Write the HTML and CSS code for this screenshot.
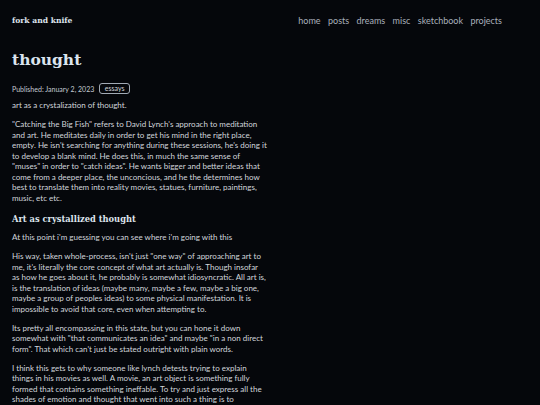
FILE: index.html
```html
<!DOCTYPE html>
<html>
<head>
<meta charset="utf-8">
<link rel="stylesheet" href="styles.css">
</head>
<body>
<header class="site-header">
  <a class="brand" href="#">fork and knife</a>
  <nav class="nav">
    <a href="#">home</a>
    <a href="#">posts</a>
    <a href="#">dreams</a>
    <a href="#">misc</a>
    <a href="#">sketchbook</a>
    <a href="#">projects</a>
  </nav>
</header>
<main class="post">
  <h1 class="title">thought</h1>
  <div class="meta">
    <span class="date">Published: January 2, 2023</span>
    <span class="tag">essays</span>
  </div>
  <p>art as a crystalization of thought.</p>
  <p>"Catching the Big Fish" refers to David Lynch's approach to meditation and art. He meditates daily in order to get his mind in the right place, empty. He isn't searching for anything during these sessions, he's doing it to develop a blank mind. He does this, in much the same sense of "muses" in order to "catch ideas". He wants bigger and better ideas that come from a deeper place, the unconcious, and he the determines how best to translate them into reality movies, statues, furniture, paintings, music, etc etc.</p>
  <h2 class="section">Art as crystallized thought</h2>
  <p>At this point i'm guessing you can see where i'm going with this</p>
  <p>His way, taken whole-process, isn't just "one way" of approaching art to me, it's literally the core concept of what art actually is. Though insofar as how he goes about it, he probably is somewhat idiosyncratic. All art is, is the translation of ideas (maybe many, maybe a few, maybe a big one, maybe a group of peoples ideas) to some physical manifestation. It is impossible to avoid that core, even when attempting to.</p>
  <p>Its pretty all encompassing in this state, but you can hone it down somewhat with "that communicates an idea" and maybe "in a non direct form". That which can't just be stated outright with plain words.</p>
  <p>I think this gets to why someone like lynch detests trying to explain things in his movies as well. A movie, an art object is something fully formed that contains something ineffable. To try and just express all the shades of emotion and thought that went into such a thing is to</p>
</main>
</body>
</html>
```
FILE: styles.css
```css
html, body {
  margin: 0;
  padding: 0;
  background: #05070b;
}
body {
  font-family: "Lato", "Noto Sans", sans-serif;
  color: #d2d6dc;
  font-size: 8px;
  line-height: 10.5px;
  overflow: hidden;
  height: 405px;
}
a { text-decoration: none; color: inherit; }
.site-header {
  display: flex;
  justify-content: space-between;
  align-items: center;
  padding: 15px 38px 0 12px;
  height: 12px;
}
.brand {
  font-family: "DejaVu Serif", serif;
  font-weight: bold;
  font-size: 7.6px;
  color: #dfe5ee;
}
.nav {
  display: flex;
  gap: 7.4px;
  font-size: 9px;
  color: #a9b0bb;
}
.post {
  width: 255px;
  padding: 0 12px;
}
.title {
  font-family: "DejaVu Serif", serif;
  font-weight: bold;
  font-size: 15.5px;
  line-height: 20px;
  color: #dbe4ee;
  margin: 23px 0 0;
}
.meta {
  display: flex;
  align-items: center;
  gap: 5px;
  margin-top: 13px;
  font-size: 7px;
  line-height: 10px;
  color: #c4c9d1;
}
.tag {
  border: 1px solid #a2aab5;
  border-radius: 3px;
  padding: 0 4.5px;
  font-size: 7px;
  line-height: 9px;
  color: #d2d6dc;
}
p {
  margin: 8.5px 0 0;
}
.meta + p { margin-top: 6px; }
.section {
  font-family: "DejaVu Serif", serif;
  font-weight: bold;
  font-size: 8.3px;
  line-height: 11px;
  color: #dfe5ee;
  margin: 10.5px 0 0;
}
.section + p { margin-top: 7.5px; }
```
